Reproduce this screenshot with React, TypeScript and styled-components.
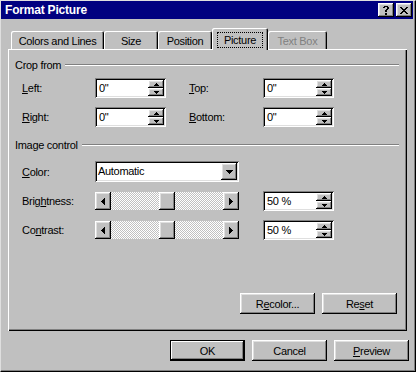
import styled, { createGlobalStyle, css } from 'styled-components'

const GlobalStyle = createGlobalStyle`
  html, body {
    margin: 0;
    padding: 0;
    background: #c0c0c0;
  }

  body {
    font-family: "Liberation Sans", Arial, sans-serif;
    font-size: 11px;
    letter-spacing: -0.3px;
    color: #000;
  }
`

const raised = css`
  background: #c0c0c0;
  box-shadow:
    inset -1px -1px 0 #000,
    inset 1px 1px 0 #fff,
    inset -2px -2px 0 #808080,
    inset 2px 2px 0 #dfdfdf;
`

const sunken = css`
  background: #fff;
  box-shadow:
    inset 1px 1px 0 #808080,
    inset -1px -1px 0 #fff,
    inset 2px 2px 0 #000,
    inset -2px -2px 0 #dfdfdf;
`

const Window = styled.div`
  box-sizing: border-box;
  width: 416px;
  height: 372px;
  display: flex;
  flex-direction: column;
  background: #c0c0c0;
  border: 1px solid;
  border-color: #dfdfdf #000 #000 #dfdfdf;
  box-shadow: inset -1px -1px 0 #808080;
  padding: 0 2px 2px 0;
`

const TitleBar = styled.div`
  height: 18px;
  display: flex;
  align-items: center;
  gap: 2px;
  padding: 0 1px 0 4px;
  background: #000080;
  color: #fff;
`

const Title = styled.div`
  flex: 1;
  font-weight: bold;
  font-size: 12px;
  letter-spacing: -0.2px;
`

const CaptionButton = styled.div`
  width: 16px;
  height: 14px;
  display: grid;
  place-items: center;
  ${raised}
`

const Body = styled.div`
  flex: 1;
  display: flex;
  flex-direction: column;
  padding: 9px 0 0 7px;
`

const TabRow = styled.div`
  height: 21px;
  display: flex;
  align-items: flex-end;
  padding-left: 3px;
`

const Tab = styled.div<{ $w: number; $active?: boolean; $disabled?: boolean }>`
  box-sizing: border-box;
  width: ${({ $w }) => $w}px;
  height: ${({ $active }) => ($active ? 22 : 18)}px;
  margin-bottom: ${({ $active }) => ($active ? -1 : 0)}px;
  position: relative;
  z-index: ${({ $active }) => ($active ? 1 : 0)};
  display: flex;
  align-items: center;
  justify-content: center;
  padding-top: 1px;
  background: #c0c0c0;
  border-radius: 2px 2px 0 0;
  color: ${({ $disabled }) => ($disabled ? '#808080' : '#000')};
  box-shadow:
    inset 1px 1px 0 #fff,
    inset -1px 0 0 #000,
    inset -2px 0 0 #808080;
`

const Focus = styled.span`
  line-height: 12px;
  padding: 1px 6px;
  border: 1px dotted #000;
`

const Panel = styled.div`
  box-sizing: border-box;
  width: 399px;
  height: 282px;
  display: flex;
  flex-direction: column;
  padding: 9px 8px 17px 7px;
  box-shadow:
    inset 1px 1px 0 #fff,
    inset -1px -1px 0 #000,
    inset -2px -2px 0 #808080;
`

const GroupHeader = styled.div<{ $top: number }>`
  height: 14px;
  display: flex;
  align-items: center;
  gap: 4px;
  margin-top: ${({ $top }) => $top}px;
`

const Rule = styled.div`
  flex: 1;
  border-top: 1px solid #808080;
  border-bottom: 1px solid #fff;
`

const CropGrid = styled.div`
  display: grid;
  grid-template-columns: 80px 71px 23px 74px 71px;
  grid-auto-rows: 20px;
  row-gap: 9px;
  align-items: center;
  margin-top: 6px;
`

const ControlGrid = styled.div`
  display: grid;
  grid-template-columns: 80px 144px 24px 71px;
  grid-template-rows: 21px 20px 20px;
  row-gap: 9px;
  align-items: center;
  margin-top: 9px;
`

const Label = styled.div<{ $col?: number }>`
  padding-left: ${({ $col }) => ($col ? 0 : 7)}px;
  white-space: nowrap;
  grid-column: ${({ $col }) => $col ?? 'auto'};
`

const Key = styled.span`
  text-decoration: underline;
  text-underline-offset: 1px;
`

const SpinField = styled.div`
  box-sizing: border-box;
  height: 20px;
  display: flex;
  padding: 2px;
  ${sunken}
`

const FieldValue = styled.div`
  flex: 1;
  padding-left: 2px;
  line-height: 16px;
  white-space: pre;
`

const SpinButtons = styled.div`
  width: 16px;
  display: flex;
  flex-direction: column;
`

const SpinButton = styled.div`
  height: 8px;
  display: grid;
  place-items: center;
  ${raised}
`

const Combo = styled.div`
  box-sizing: border-box;
  height: 21px;
  display: flex;
  padding: 2px;
  ${sunken}
`

const ComboText = styled.div`
  flex: 1;
  padding-left: 1px;
  line-height: 17px;
`

const ComboButton = styled.div`
  width: 16px;
  display: grid;
  place-items: center;
  ${raised}
`

const Slider = styled.div`
  height: 18px;
  display: flex;
`

const ScrollButton = styled.div`
  width: 16px;
  display: grid;
  place-items: center;
  ${raised}
`

const Track = styled.div`
  flex: 1;
  display: flex;
  background-color: #c0c0c0;
  background-image: conic-gradient(#fff 0 90deg, #c0c0c0 90deg 180deg, #fff 180deg 270deg, #c0c0c0 270deg);
  background-size: 2px 2px;
`

const Thumb = styled.div`
  width: 16px;
  flex: none;
  ${raised}
`

const ButtonRow = styled.div<{ $pad: number }>`
  display: flex;
  justify-content: flex-end;
  gap: 7px;
  padding-right: ${({ $pad }) => $pad}px;
`

const PanelButtons = styled(ButtonRow)`
  margin-top: auto;
`

const Footer = styled(ButtonRow)`
  margin-top: 9px;
`

const PushButton = styled.div<{ $default?: boolean }>`
  width: 75px;
  height: 21px;
  display: grid;
  place-items: center;
  background: #c0c0c0;
  box-shadow: ${({ $default }) =>
    $default
      ? 'inset 0 0 0 1px #000, inset -2px -2px 0 #000, inset 2px 2px 0 #fff, inset -3px -3px 0 #808080'
      : 'inset -1px -1px 0 #000, inset 1px 1px 0 #fff, inset -2px -2px 0 #808080, inset 2px 2px 0 #dfdfdf'};
`

// pixel drawings, one string per row
const PixelIcon = ({ rows }: { rows: string[] }) => (
  <svg width={rows[0].length} height={rows.length} shapeRendering="crispEdges" style={{ display: 'block' }}>
    {rows.flatMap((r, y) =>
      r.split('').map((c, x) => (c === 'x' ? <rect key={`${x}-${y}`} x={x} y={y} width={1} height={1} fill="#000" /> : null))
    )}
  </svg>
)

type Dir = 'up' | 'down' | 'left' | 'right'

const arrowRows = (dir: Dir, size: number) => {
  const w = 2 * size - 1
  const tri = Array.from({ length: size }, (_, i) => ' '.repeat(i) + 'x'.repeat(w - 2 * i) + ' '.repeat(i))
  if (dir === 'down') return tri
  if (dir === 'up') return [...tri].reverse()
  const cols = dir === 'right' ? tri : [...tri].reverse()
  return Array.from({ length: w }, (_, y) => cols.map((col) => col[y]).join(''))
}

const Arrow = ({ dir, size }: { dir: Dir; size: number }) => <PixelIcon rows={arrowRows(dir, size)} />

const closeGlyph = ['xx....xx', '.xx..xx.', '..xxxx..', '...xx...', '..xxxx..', '.xx..xx.', 'xx....xx']
const helpGlyph = ['.xxxx.', 'xx..xx', '....xx', '...xx.', '..xx..', '..xx..', '......', '..xx..', '..xx..']

const Spin = ({ value }: { value: string }) => (
  <SpinField>
    <FieldValue>{value}</FieldValue>
    <SpinButtons>
      <SpinButton>
        <Arrow dir="up" size={3} />
      </SpinButton>
      <SpinButton>
        <Arrow dir="down" size={3} />
      </SpinButton>
    </SpinButtons>
  </SpinField>
)

const ScrollSlider = ({ value }: { value: number }) => (
  <Slider>
    <ScrollButton>
      <Arrow dir="left" size={4} />
    </ScrollButton>
    <Track>
      <div style={{ flex: value }} />
      <Thumb />
      <div style={{ flex: 100 - value }} />
    </Track>
    <ScrollButton>
      <Arrow dir="right" size={4} />
    </ScrollButton>
  </Slider>
)

const tabs = [
  { label: 'Colors and Lines', w: 93 },
  { label: 'Size', w: 54 },
  { label: 'Position', w: 54 },
  { label: 'Picture', w: 56, active: true },
  { label: 'Text Box', w: 59, disabled: true },
]

const App = () => (
  <>
    <GlobalStyle />
    <Window>
      <TitleBar>
        <Title>Format Picture</Title>
        <CaptionButton>
          <PixelIcon rows={helpGlyph} />
        </CaptionButton>
        <CaptionButton>
          <PixelIcon rows={closeGlyph} />
        </CaptionButton>
      </TitleBar>
      <Body>
        <TabRow>
          {tabs.map((t) => (
            <Tab key={t.label} $w={t.w} $active={t.active} $disabled={t.disabled}>
              {t.active ? <Focus>{t.label}</Focus> : t.label}
            </Tab>
          ))}
        </TabRow>
        <Panel>
          <GroupHeader $top={0}>
            <span>Crop from</span>
            <Rule />
          </GroupHeader>
          <CropGrid>
            <Label>
              <Key>L</Key>eft:
            </Label>
            <Spin value={'0"'} />
            <Label $col={4}>
              <Key>T</Key>op:
            </Label>
            <Spin value={'0"'} />
            <Label>
              <Key>R</Key>ight:
            </Label>
            <Spin value={'0"'} />
            <Label $col={4}>
              <Key>B</Key>ottom:
            </Label>
            <Spin value={'0"'} />
          </CropGrid>
          <GroupHeader $top={11}>
            <span>Image control</span>
            <Rule />
          </GroupHeader>
          <ControlGrid>
            <Label>
              <Key>C</Key>olor:
            </Label>
            <Combo>
              <ComboText>Automatic</ComboText>
              <ComboButton>
                <Arrow dir="down" size={4} />
              </ComboButton>
            </Combo>
            <div />
            <div />
            <Label>
              Brig<Key>h</Key>tness:
            </Label>
            <ScrollSlider value={50} />
            <div />
            <Spin value="50 %" />
            <Label>
              Co<Key>n</Key>trast:
            </Label>
            <ScrollSlider value={50} />
            <div />
            <Spin value="50 %" />
          </ControlGrid>
          <PanelButtons $pad={2}>
            <PushButton>
              <span>
                R<Key>e</Key>color...
              </span>
            </PushButton>
            <PushButton>
              <span>
                Re<Key>s</Key>et
              </span>
            </PushButton>
          </PanelButtons>
        </Panel>
        <Footer $pad={4}>
          <PushButton $default>OK</PushButton>
          <PushButton>Cancel</PushButton>
          <PushButton>
            <span>
              <Key>P</Key>review
            </span>
          </PushButton>
        </Footer>
      </Body>
    </Window>
  </>
)

export default App
